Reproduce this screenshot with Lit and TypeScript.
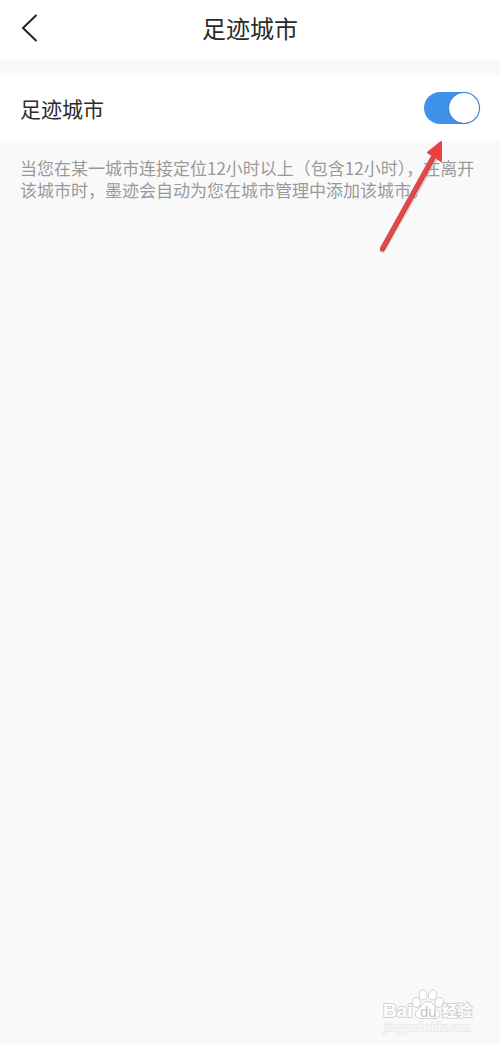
import { LitElement, html, css } from "lit";
import { customElement, state } from "lit/decorators.js";

@customElement("app-root")
export class AppRoot extends LitElement {
  static styles = css`
    :host {
      display: block;
      position: relative;
      min-height: 100vh;
      background: #f9f9f9;
      color: #2b2b2b;
      font-family: "Noto Sans CJK SC", sans-serif;
    }
    .bar {
      display: grid;
      grid-template-columns: 60px 1fr 60px;
      align-items: center;
      height: 60px;
      padding-bottom: 4px;
      box-sizing: border-box;
      background: #fff;
    }
    .back {
      display: flex;
      justify-content: center;
      padding: 0;
      border: 0;
      background: none;
      color: #222;
      cursor: pointer;
    }
    .title {
      margin: 0;
      font-size: 24px;
      font-weight: 400;
      line-height: 32px;
      text-align: center;
    }
    .row {
      display: flex;
      align-items: center;
      justify-content: space-between;
      height: 66px;
      margin-top: 15px;
      padding: 0 20px;
      box-sizing: border-box;
      background: #fff;
      font-size: 21px;
      line-height: 32px;
    }
    .switch {
      appearance: none;
      display: flex;
      align-items: center;
      width: 56px;
      height: 32px;
      margin: 0;
      padding: 0 1px;
      box-sizing: border-box;
      border-radius: 16px;
      background: #c9c9c9;
      cursor: pointer;
    }
    .switch::before {
      content: "";
      width: 30px;
      height: 30px;
      border-radius: 50%;
      background: #fff;
      box-shadow: 0 0 2px #1d5590;
    }
    .switch:checked {
      justify-content: flex-end;
      background: #3f92ea;
    }
    .note {
      margin: 0;
      padding: 16px 20px;
      color: #999;
      font-size: 17px;
      line-height: 22px;
    }
    .arrow {
      position: absolute;
      top: 138px;
      right: 54px;
      pointer-events: none;
    }
    .mark {
      position: absolute;
      right: 20px;
      bottom: 8px;
    }
    .mark text {
      font-family: "Liberation Sans", "Noto Sans CJK SC", sans-serif;
      font-weight: 700;
      fill: #fff;
      stroke: #d2d2d2;
      stroke-width: 2px;
      paint-order: stroke;
    }
    .mark .inner {
      font-weight: 400;
      fill: #c4c4c4;
      stroke: none;
    }
    .mark .site {
      font-family: "Liberation Serif", serif;
      font-weight: 400;
      fill: #fcfcfc;
      stroke: #ebebeb;
    }
  `;

  @state() private enabled = true;

  private toggle(e: Event) {
    this.enabled = (e.target as HTMLInputElement).checked;
  }

  render() {
    return html`
      <header class="bar">
        <button class="back" aria-label="返回">
          <svg width="20" height="32" viewBox="0 0 20 32" fill="none" stroke="currentColor" stroke-width="2">
            <path d="M16.500 3 3 16 16.500 29" />
          </svg>
        </button>
        <h1 class="title">足迹城市</h1>
      </header>
      <main>
        <div class="row">
          <label for="footprint">足迹城市</label>
          <input id="footprint" class="switch" type="checkbox" role="switch" .checked=${this.enabled} @change=${this.toggle} />
        </div>
        <p class="note">当您在某一城市连接定位12小时以上（包含12小时），在离开该城市时，墨迹会自动为您在城市管理中添加该城市。</p>
      </main>
      <svg class="arrow" width="70" height="118" viewBox="0 0 70 118" aria-hidden="true">
        <path d="M6.500 112 58 22" stroke="#b08080" stroke-width="6" stroke-linecap="round" opacity=".35" />
        <path d="M6.500 111 57 20" stroke="#c8403f" stroke-width="5" stroke-linecap="round" />
        <path d="M6 110.500 56.500 19.500" stroke="#e04a4a" stroke-width="4" stroke-linecap="round" />
        <path d="M65 4 52 14.500 65 23Z" fill="#ed3b3e" stroke="#e54444" stroke-linejoin="round" stroke-width="2" />
      </svg>
      <svg class="mark" width="98" height="56" viewBox="0 0 98 56">
        <g fill="#fff" stroke="#d0d0d0">
          <ellipse cx="34.500" cy="22.500" rx="4" ry="5" transform="rotate(-15 34.500 22.500)" />
          <ellipse cx="41" cy="15" rx="4" ry="5" transform="rotate(-5 41 15)" />
          <ellipse cx="50.500" cy="15" rx="4" ry="5" transform="rotate(8 50.500 15)" />
          <ellipse cx="57" cy="22.500" rx="4" ry="5" transform="rotate(20 57 22.500)" />
          <path d="M46 21.500c5 0 6 5 9 8 5 5 3 9-3 9h-13c-6 0-8-5-3-9 4-3 5-8 10-8Z" />
        </g>
        <text x="1" y="37" font-size="19">Bai</text>
        <text class="inner" x="38" y="37" font-size="15">du</text>
        <text x="60" y="36" font-size="15">经验</text>
        <text class="site" x="2" y="51" font-size="12">jingyanbaidu.com</text>
      </svg>
    `;
  }
}
